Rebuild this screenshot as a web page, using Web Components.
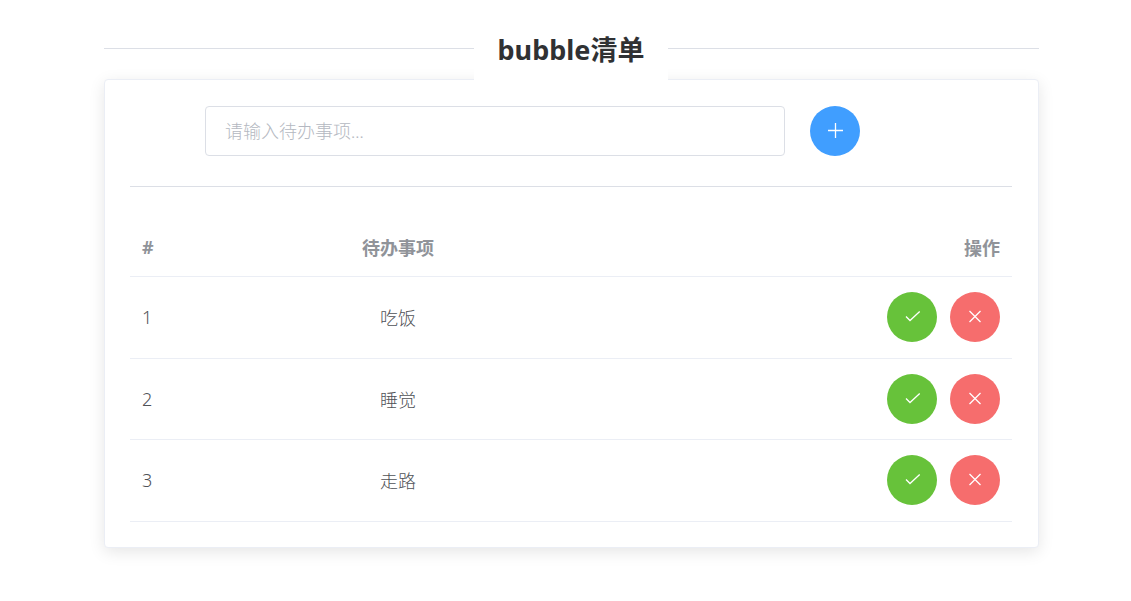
<!DOCTYPE html>
<html lang="zh">
<head>
<meta charset="utf-8">
<title>bubble清单</title>
<style>
    html, body { margin: 0; background: #fff; }
    body {
        min-height: 100vh;
        font-family: "Noto Sans", "Noto Sans CJK SC", sans-serif;
        color: #606266;
    }
</style>
</head>
<body>

<todo-app>
    <todo-row num="1" text="吃饭"></todo-row>
    <todo-row num="2" text="睡觉"></todo-row>
    <todo-row num="3" text="走路"></todo-row>
</todo-app>

<script>
const ICONS = {
    plus: '<path d="M8.5 0V15M1 7.5H16"/>',
    check: '<path d="M2 7.5L6 11.5L15.7 2.5"/>',
    close: '<path d="M2.5 2L13.5 13M13.5 2L2.5 13"/>'
};

class RoundButton extends HTMLElement {
    constructor(){
        super();

        this.attachShadow({mode: 'open'});
        this.shadowRoot.innerHTML = `
            <style>
                :host {
                    display: flex;
                    width: 50px;
                    height: 50px;
                    border-radius: 50%;
                    justify-content: center;
                    align-items: center;
                    background: var(--btn-color, #409EFF);
                    cursor: pointer;
                }
                svg {
                    fill: none;
                    stroke: #fff;
                    stroke-width: 1.3;
                    overflow: visible;
                }
            </style>
            <svg width="16" height="16" viewBox="0 0 16 16">${ICONS[this.getAttribute('icon')]}</svg>
        `;
    }
}

class TodoRow extends HTMLElement {
    constructor(){
        super();

        this.attachShadow({mode: 'open'});
        this.shadowRoot.innerHTML = `
            <style>
                :host {
                    display: grid;
                    grid-template-columns: 50px 412px 1fr;
                    align-items: center;
                    padding: 15px 12px 15.67px 12px;
                    border-bottom: 1px solid #EBEEF5;
                    font-size: 18px;
                    font-weight: 300;
                    color: #505257;
                }
                .text { text-align: center; }
                .ops {
                    display: flex;
                    justify-content: flex-end;
                    gap: 13px;
                }
                .ok { --btn-color: #67C23A; }
                .del { --btn-color: #F66D6D; }
            </style>
            <span>${this.getAttribute('num')}</span>
            <span class="text">${this.getAttribute('text')}</span>
            <div class="ops">
                <round-button class="ok" icon="check"></round-button>
                <round-button class="del" icon="close"></round-button>
            </div>
        `;
    }
}

class TodoApp extends HTMLElement {
    constructor(){
        super();

        this.attachShadow({mode: 'open'});
        this.shadowRoot.innerHTML = `
            <style>
                :host {
                    display: block;
                    width: 935px;
                    padding: 16px 0 53px 104px;
                }
                header {
                    display: flex;
                    align-items: center;
                    position: relative;
                    z-index: 1;
                    margin-bottom: -1px;
                }
                header i {
                    flex: 1;
                    height: 1px;
                    background: #DCDFE6;
                }
                header i:first-child { flex: 0 0 370px; }
                h1 {
                    margin: 0;
                    width: 194px;
                    height: 64px;
                    line-height: 67px;
                    text-align: center;
                    font-size: 27px;
                    font-weight: 700;
                    color: #303133;
                    background: #fff;
                }
                #card {
                    box-sizing: border-box;
                    height: 469px;
                    padding: 26px 26px 0 25px;
                    background: #fff;
                    border: 1px solid #EBEEF5;
                    border-radius: 4px;
                    box-shadow: 0 4px 16px 0 rgba(0,0,0,0.1);
                }
                form {
                    display: flex;
                    gap: 25px;
                    margin: 0 0 30px 75px;
                }
                input {
                    box-sizing: border-box;
                    width: 580px;
                    height: 50px;
                    padding: 0 19px;
                    border: 1px solid #DCDFE6;
                    border-radius: 4px;
                    outline: none;
                    font: inherit;
                    font-family: Lato, "Noto Sans CJK SC", sans-serif;
                    font-size: 18px;
                    font-weight: 300;
                    color: #606266;
                }
                input::placeholder { color: #B4B8C1; opacity: 1; }
                #line {
                    height: 1px;
                    background: #DCDFE6;
                    margin-bottom: 32px;
                }
                #head {
                    display: grid;
                    grid-template-columns: 50px 412px 1fr;
                    align-items: center;
                    height: 58px;
                    padding: 0 12px 2px 12px;
                    box-sizing: border-box;
                    border-bottom: 1px solid #EBEEF5;
                    font-size: 18px;
                    font-weight: 700;
                    color: #909399;
                }
                #head span:nth-child(2) { text-align: center; }
                #head span:nth-child(3) { text-align: right; }
            </style>
            <header>
                <i></i>
                <h1>bubble清单</h1>
                <i></i>
            </header>
            <section id="card">
                <form>
                    <input type="text" placeholder="请输入待办事项...">
                    <round-button icon="plus"></round-button>
                </form>
                <div id="line"></div>
                <div id="head">
                    <span>#</span>
                    <span>待办事项</span>
                    <span>操作</span>
                </div>
                <slot></slot>
            </section>
        `;
    }
}

customElements.define('round-button', RoundButton);
customElements.define('todo-row', TodoRow);
customElements.define('todo-app', TodoApp);
</script>
</body>
</html>
